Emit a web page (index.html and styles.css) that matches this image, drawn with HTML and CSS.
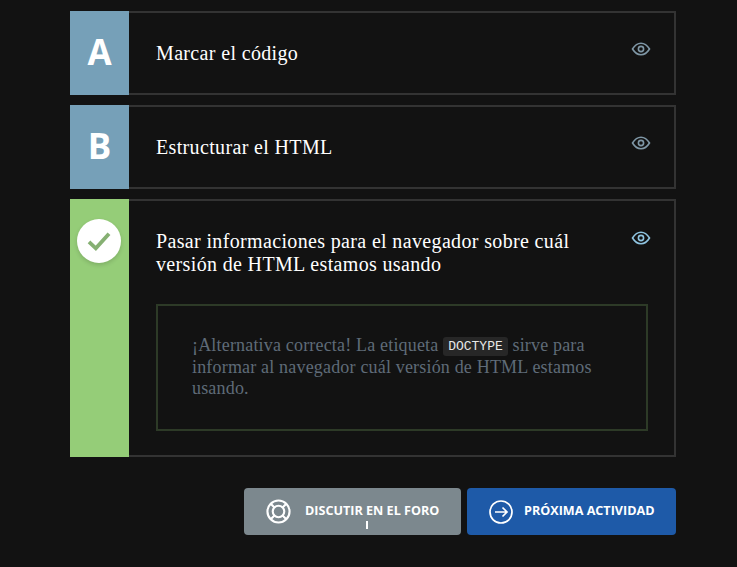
FILE: index.html
```html
<!DOCTYPE html>
<html lang="es">
<head>
    <meta charset="UTF-8">
    <title>Alternativas</title>
    <link rel="stylesheet" href="styles.css">
</head>
<body>
    <div class="activity">
        <ul class="alternatives">
            <li class="alternative">
                <div class="letter">A</div>
                <div class="alternative-body">
                    <div class="alternative-head">
                        <p class="alternative-text">Marcar el código</p>
                        <svg class="eye" viewBox="0 0 20 14" fill="none" stroke="currentColor" stroke-width="1.6"><path d="M1.5 7C4 3 6.8 1.2 10 1.2S16 3 18.5 7C16 11 13.200 12.800 10 12.800S4 11 1.500 7Z"/><circle cx="10" cy="7" r="2.600"/></svg>
                    </div>
                </div>
            </li>
            <li class="alternative">
                <div class="letter">B</div>
                <div class="alternative-body">
                    <div class="alternative-head">
                        <p class="alternative-text">Estructurar el HTML</p>
                        <svg class="eye" viewBox="0 0 20 14" fill="none" stroke="currentColor" stroke-width="1.6"><path d="M1.5 7C4 3 6.8 1.2 10 1.2S16 3 18.5 7C16 11 13.200 12.800 10 12.800S4 11 1.500 7Z"/><circle cx="10" cy="7" r="2.600"/></svg>
                    </div>
                </div>
            </li>
            <li class="alternative correct">
                <div class="letter">
                    <span class="check">
                        <svg viewBox="0 0 26 22" width="24" height="20" fill="none" stroke="#86b073" stroke-width="4.200"><path d="M2 12L9.500 19L24 3"/></svg>
                    </span>
                </div>
                <div class="alternative-body">
                    <div class="alternative-head">
                        <p class="alternative-text">Pasar informaciones para el navegador sobre cuál versión de HTML estamos usando</p>
                        <svg class="eye" viewBox="0 0 20 14" fill="none" stroke="currentColor" stroke-width="1.6"><path d="M1.5 7C4 3 6.8 1.2 10 1.2S16 3 18.5 7C16 11 13.200 12.800 10 12.800S4 11 1.500 7Z"/><circle cx="10" cy="7" r="2.600"/></svg>
                    </div>
                    <div class="feedback">
                        <p>¡Alternativa correcta! La etiqueta <code>DOCTYPE</code> sirve para informar al navegador cuál versión de HTML estamos usando.</p>
                    </div>
                </div>
            </li>
        </ul>

        <div class="actions">
            <a class="btn btn-forum" href="#">
                <svg class="btn-icon-forum" viewBox="0 0 26 26" fill="none" stroke="#fff" stroke-width="2.200"><circle cx="13" cy="13" r="11.500"/><circle cx="13" cy="13" r="6"/><path d="M4.900 4.900L8.800 8.800M21.100 4.900L17.200 8.800M4.900 21.100L8.800 17.200M21.100 21.100L17.200 17.200"/></svg>
                <span>DISCUTIR EN EL FORO</span>
                <i class="cursor"></i>
            </a>
            <a class="btn btn-next" href="#">
                <svg class="btn-icon-next" viewBox="0 0 24 24" fill="none" stroke="#fff" stroke-width="1.700"><circle cx="12" cy="12" r="11"/><path d="M6 12H18M13.500 7.500L18 12L13.500 16.500"/></svg>
                <span>PRÓXIMA ACTIVIDAD</span>
            </a>
        </div>
    </div>
</body>
</html>
```

FILE: styles.css
```css
* {
    box-sizing: border-box;
}

body {
    background: #121212;
    margin: 0;
    height: 567px;
    overflow: hidden;
    font-family: "Liberation Serif", serif;
}

.activity {
    width: 606px;
    margin-left: 70px;
    padding-top: 11px;
}

.alternatives {
    list-style: none;
    margin: 0;
    padding: 0;
}

.alternative {
    display: flex;
    min-height: 84px;
    margin-bottom: 10px;
    border: 2px solid #333;
    border-left: none;
}

.letter {
    flex: 0 0 59px;
    margin: -2px 0;
    background: #76a0b8;
    color: #fff;
    font-family: "Open Sans", sans-serif;
    font-weight: 700;
    font-size: 35px;
    line-height: 82px;
    text-align: center;
}

.alternative-body {
    flex: 1;
    padding: 29px 23px 24px 27px;
}

.alternative-head {
    display: flex;
    justify-content: space-between;
    align-items: flex-start;
}

.alternative-text {
    margin: 0;
    width: 445px;
    color: #fff;
    font-size: 20px;
    letter-spacing: 0.35px;
    line-height: 23px;
}

.eye {
    width: 20px;
    height: 14px;
    color: #7f97a6;
}

.correct {
    margin-bottom: 31px;
    height: 258px;
}

.correct .letter {
    background: #95cd78;
    padding-top: 20px;
    line-height: 0;
}

.correct .eye {
    color: #8fc4e0;
    margin-top: 1px;
}

.check {
    display: inline-flex;
    justify-content: center;
    align-items: center;
    width: 44px;
    height: 44px;
    margin-left: -1px;
    border-radius: 50%;
    background: #fff;
    box-shadow: 0 2px 4px rgba(0,0,0,0.15);
}

.feedback {
    margin-top: 28px;
    margin-right: 3px;
    height: 127px;
    padding: 29px 34px;
    border: 2px solid #2d3a27;
}

.feedback p {
    margin: 0;
    color: #5f6b78;
    font-size: 18px;
    letter-spacing: 0.18px;
    line-height: 21.500px;
}

code {
    padding: 2px 5px;
    border-radius: 3px;
    background: #272727;
    color: #e8e8e8;
    font-family: "Liberation Mono", monospace;
    font-size: 13px;
    letter-spacing: 0;
    line-height: 0;
    position: relative;
    top: -1px;
}

.actions {
    display: flex;
    justify-content: flex-end;
    gap: 6px;
}

.btn {
    position: relative;
    display: flex;
    align-items: center;
    height: 47px;
    border-radius: 4px;
    color: #fff;
    font-family: "Open Sans", sans-serif;
    font-weight: 700;
    font-size: 12.600px;
    text-decoration: none;
}

.btn span {
    margin-top: -2px;
}

.btn-forum {
    width: 217px;
    padding-left: 22px;
    gap: 14px;
    background: #7c888e;
}

.btn-next {
    width: 209px;
    padding-left: 22px;
    gap: 11px;
    background: #1e5aa8;
}

.btn-icon-forum {
    width: 25px;
    height: 25px;
}

.btn-icon-next {
    width: 24px;
    height: 24px;
}

.cursor {
    position: absolute;
    left: 122px;
    top: 33px;
    width: 2px;
    height: 8px;
    background: #fff;
}
```
